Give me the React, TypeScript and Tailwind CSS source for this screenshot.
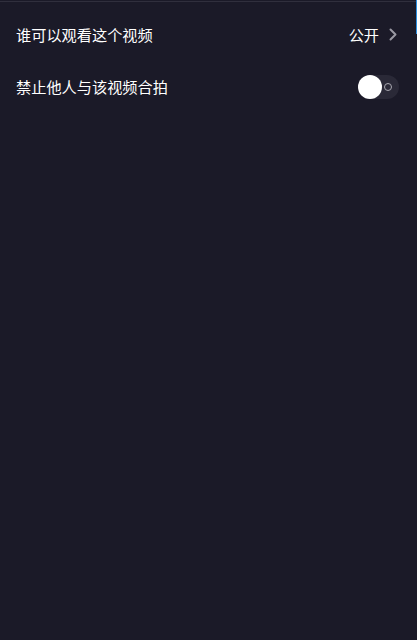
import React from "react";

function Chevron() {
  return (
    <svg width="8" height="13" viewBox="0 0 8 13" fill="none">
      <path d="M1.5 1.5L6.5 6.5L1.5 11.5" stroke="#9a99a3" strokeWidth="2" strokeLinecap="round" strokeLinejoin="round" />
    </svg>
  );
}

function Toggle() {
  return (
    <div className="relative w-[40px] h-[24px] rounded-full bg-[#2a2937] flex items-center">
      <div className="absolute left-[-1px] w-[24px] h-[24px] rounded-full bg-white" />
      <div className="absolute right-[7px] w-[8px] h-[8px] rounded-full border border-[#a9a8b0]" />
    </div>
  );
}

export default function App() {
  return (
    <div
      className="relative w-[417px] h-[640px] bg-[#1b1a28] text-white overflow-hidden"
      style={{ fontFamily: '"Noto Sans CJK SC", "Noto Sans", sans-serif' }}
    >
      <div className="h-[1px] bg-[#1b1a28]" />
      <div className="h-[1px] bg-[#302f3d]" />
      <div className="absolute right-0 top-0 w-[1px] h-[34px] bg-[#2a8ee0]" />
      <div className="pt-[7px]">
        <div className="flex items-center justify-between h-[52px] pl-[16px] pr-[20px]">
          <span className="text-[15.2px] leading-none">谁可以观看这个视频</span>
          <div className="flex items-center gap-[10px]">
            <span className="text-[15.2px] leading-none">公开</span>
            <Chevron />
          </div>
        </div>
        <div className="flex items-center justify-between h-[52px] pl-[16px] pr-[18px]">
          <span className="text-[15.2px] leading-none">禁止他人与该视频合拍</span>
          <Toggle />
        </div>
      </div>
    </div>
  );
}
